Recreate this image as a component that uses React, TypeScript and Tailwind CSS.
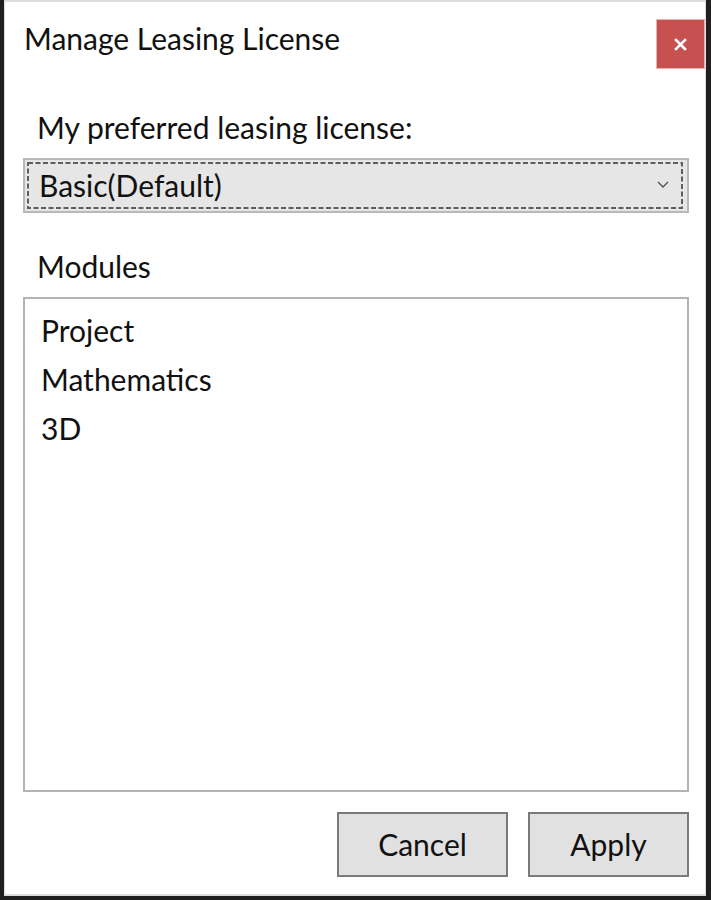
import React from "react";

const font = { fontFamily: 'Lato, "Open Sans", sans-serif' };

export default function App() {
  return (
    <div className="w-[711px] h-[900px] bg-[#1f1f1f] flex pl-[4px] pr-[5px] pb-[4px] overflow-hidden" style={font}>
      <div className="flex-1 flex flex-col bg-white border-t-2 border-l border-r border-b-2 border-[#dcdcdc] text-black">
        {/* title bar */}
        <div className="shrink-0 flex justify-between items-start h-[77px]">
          <div className="pl-[19px] pt-[18px] text-[30px] leading-[36px] text-[#111]">Manage Leasing License</div>
          <div className="mt-[17px] w-[49px] h-[50px] bg-[#c75050] border border-[#e8b0b0] flex items-center justify-center">
            <svg width="13" height="13" viewBox="0 0 13 13">
              <path d="M2 2 L11 11 M11 2 L2 11" stroke="white" strokeWidth="2.6" strokeLinecap="square" />
            </svg>
          </div>
        </div>

        <div className="shrink-0 flex flex-col px-[18px] pr-[16px]">
          <div className="shrink-0 pl-[14px] text-[30px] leading-[36px] h-[36px] mt-[30px] text-[#111]">My preferred leasing license:</div>
          <div className="shrink-0 mt-[13px] h-[55px] border-2 border-[#b8b8b8] bg-[#e6e6e6] relative flex items-center justify-between pl-[14px] pr-[18px]">
            <span className="text-[30px] leading-[36px] text-[#111] mt-[-2px]">Basic(Default)</span>
            <svg width="12" height="8" viewBox="0 0 12 8" className="mt-[-2px]">
              <polyline points="1,1 6,6 11,1" fill="none" stroke="#555" strokeWidth="1.4" />
            </svg>
            <svg className="absolute left-[2px] top-[2px]" width="656" height="47" viewBox="0 0 656 47">
              <rect x="1" y="1" width="654" height="45" fill="none" stroke="#5e5e5e" strokeWidth="2" strokeDasharray="5 2.5" />
            </svg>
          </div>

          <div className="shrink-0 pl-[14px] text-[30px] leading-[36px] h-[36px] mt-[35px] text-[#111]">Modules</div>
          <div className="shrink-0 mt-[13px] h-[495px] border-2 border-[#b4b4b4] bg-white flex flex-col pt-[7px] pl-[16px]">
            {["Project", "Mathematics", "3D"].map((m) => (
              <div key={m} className="text-[30px] leading-[49px] h-[49px] text-[#111]">{m}</div>
            ))}
          </div>

          <div className="shrink-0 flex justify-end gap-[20px] mt-[20px]">
            <div className="w-[171px] h-[65px] border-2 border-[#7a7a7a] bg-[#e1e1e1] flex items-center justify-center text-[30px] text-[#111]">Cancel</div>
            <div className="w-[161px] h-[65px] border-2 border-[#7a7a7a] bg-[#e1e1e1] flex items-center justify-center text-[30px] text-[#111]">Apply</div>
          </div>
        </div>
      </div>
    </div>
  );
}
